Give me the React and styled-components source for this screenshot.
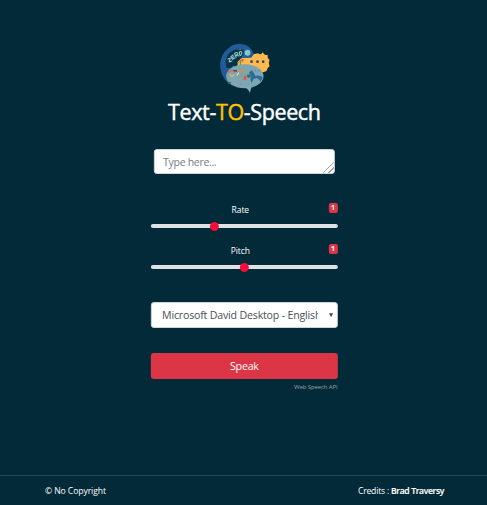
import React, { useState } from "react";
import styled, { createGlobalStyle } from "styled-components";

const GlobalStyle = createGlobalStyle`
  * { box-sizing: border-box; }
  body {
    margin: 0;
    background: #032a38;
    color: #fff;
    font-family: "Open Sans", "Noto Sans", sans-serif;
    overflow: hidden;
  }
`;

const Page = styled.div`
  height: 505px;
  display: flex;
  flex-direction: column;
`;

const Main = styled.main`
  flex: 1;
  width: 186.5px;
  margin: 0 auto;
  padding-top: 43px;
  display: flex;
  flex-direction: column;
  transform: translateX(0.85px);
`;

const Logo = styled.svg`
  width: 51px;
  height: 51px;
  margin-left: 69px;
  flex: none;
`;

const Title = styled.h1`
  margin: 1px 0 0;
  height: 33px;
  line-height: 33px;
  font-size: 21.5px;
  font-weight: 500;
  letter-spacing: -0.38px;
  text-align: center;
  white-space: nowrap;
  -webkit-text-stroke: 0.45px currentColor;
`;

const Accent = styled.span`
  color: #ffc107;
`;

const Message = styled.textarea`
  width: 181px;
  height: 25px;
  margin: 21px 3px 0;
  padding: 4px 8px 0;
  border: 1px solid #ced4da;
  border-radius: 3px;
  background: #fff;
  color: #495057;
  font: 10.6px/17px "Open Sans", sans-serif;
  letter-spacing: -0.35px;
  overflow: hidden;
  outline: none;
  &::placeholder { color: #757d84; }
  &::-webkit-resizer {
    background: linear-gradient(135deg, transparent 62%, #a5a5a5 62% 67%, transparent 67% 78%, #a5a5a5 78% 84%, transparent 84%);
  }
`;

const Sliders = styled.div`
  margin-top: 28px;
  display: flex;
  flex-direction: column;
`;

const Field = styled.div`
  height: 41px;
  display: grid;
  grid-template-columns: 1fr auto 1fr;
  grid-template-rows: 16px 16px;
`;

const Label = styled.label`
  grid-column: 2;
  font-size: 8.5px;
  line-height: 16px;
  letter-spacing: -0.08px;
  margin-right: 8px;
`;

const Badge = styled.span`
  justify-self: end;
  width: 9px;
  height: 10px;
  margin-top: 1px;
  border-radius: 2px;
  background: #dc3545;
  font-size: 7px;
  font-weight: 700;
  line-height: 10px;
  text-align: center;
`;

const Range = styled.input`
  grid-column: 1 / -1;
  appearance: none;
  width: 100%;
  height: 10px;
  margin: 3px 0 0;
  background: transparent;
  outline: none;
  &::-webkit-slider-runnable-track {
    height: 4.6px;
    border-radius: 3px;
    background: #dee2e6;
  }
  &::-webkit-slider-thumb {
    appearance: none;
    width: 9px;
    height: 9px;
    margin-top: -2.2px;
    border-radius: 50%;
    background: #f20e38;
  }
`;

const SelectBox = styled.div`
  height: 26px;
  margin-top: 18px;
  padding: 0 3px 0 10px;
  display: flex;
  align-items: center;
  border: 1px solid #ced4da;
  border-radius: 3px;
  background: #fff;
`;

const Select = styled.select`
  appearance: none;
  width: 156px;
  padding: 0;
  border: 0;
  background: transparent;
  color: #495057;
  font: 10.6px/20px "Open Sans", sans-serif;
  letter-spacing: -0.18px;
  outline: none;
`;

const Arrow = styled.svg`
  width: 4.5px;
  height: 4.5px;
  margin-left: auto;
`;

const SpeakButton = styled.button`
  height: 26px;
  margin-top: 25px;
  padding: 0;
  border: 0;
  border-radius: 3px;
  background: #dc3545;
  color: #fff;
  font: 10.7px/26px "Open Sans", sans-serif;
  letter-spacing: -0.25px;
`;

const ApiNote = styled.small`
  margin-top: 3px;
  font-size: 6px;
  line-height: 10px;
  color: #98a4aa;
  text-align: right;
  letter-spacing: -0.1px;
`;

const Footer = styled.footer`
  height: 30px;
  padding: 0 43px 0 45px;
  display: flex;
  align-items: center;
  justify-content: space-between;
  border-top: 1px solid #2b444e;
  font-size: 8.6px;
  letter-spacing: -0.08px;
`;

const Credits = styled.span`
  letter-spacing: -0.2px;
`;

const Author = styled.strong`
  font-weight: 600;
  letter-spacing: -0.35px;
  -webkit-text-stroke: 0.15px currentColor;
`;

function SpeechLogo() {
  return (
    <Logo viewBox="23 21 153 153" aria-hidden="true">
      <path d="M76 65L94 52Q115 58 138 52Q145 59 152 49Q155 59 166 56Q165 66 172 72L170 81L172 91Q164 96 163 105L147 111L98 108L76 96Z" fill="#fdb94e" />
      <path d="M125 55C115 25 83 14 54 32C27 49 18 83 28 111C34 129 48 144 64 151L57 113L71 77L90 66L117 65Z" fill="#235a98" />
      <path d="M43 96C35 67 48 47 69 41L94 41L94 54L82 72L70 83L56 96Z" fill="#08344b" />
      <circle cx="106" cy="50" r="9" fill="#83c7cb" />
      <ellipse cx="98" cy="121" rx="56" ry="36" fill="#7da6b4" />
      <path d="M96 153Q108 158 113 171Q118 160 117 150Z" fill="#85abb8" />
      <path d="M118 103Q126 110 129 119Q144 117 151 123Q151 131 145 137Q142 129 134 126L124 129L118 140Q112 128 117 119L110 110Z" fill="#2d6b9a" />
      <g fill="none" stroke="#8ed0c8" strokeWidth="3.3" strokeLinecap="round" strokeLinejoin="round">
        <path d="M47 69L54 67L51 78L59 75" />
        <path d="M63 57L56 62L61 70L68 66M58 65L65 62" />
        <path d="M72 64L67 52Q76 46 77 54L72 58L81 60" />
        <path d="M82 48Q87 44 89 50L86 58Q80 57 82 48" />
      </g>
      <circle cx="84" cy="41" r="2" fill="#e7514f" />
      <path d="M77 81L88 69L86 88Z" fill="#5e934b" />
      <path d="M88 69L96 71L90 78Z" fill="#e94444" />
      <path d="M79 83L81 75L85 84Z" fill="#f4bd45" />
      <g fill="#25485c">
        <circle cx="118" cy="77" r="4" /><circle cx="136" cy="77" r="4" /><circle cx="153" cy="77" r="4" />
      </g>
      <path d="M116 104h5M127 104h5M138 104h5" fill="none" stroke="#58899e" strokeWidth="3" />
      <g fill="none" strokeWidth="4" strokeLinecap="round">
        <path d="M49 109Q59 99 68 108" stroke="#e66745" />
        <path d="M65 104L73 105" stroke="#374d62" />
        <path d="M80 105Q87 98 96 105" stroke="#e58c43" />
        <path d="M54 115L59 123L65 116" stroke="#dfb75c" />
        <path d="M80 112Q81 123 89 120L93 112" stroke="#a79d61" />
        <path d="M75 117L79 111" stroke="#e8dec1" />
      </g>
      <path d="M96 119L103 119L102 133L94 132Z" fill="#ed5048" />
      <ellipse cx="110" cy="120" rx="6" ry="5" fill="#198253" />
      <ellipse cx="52" cy="140" rx="5" ry="3" fill="#198253" />
      <circle cx="86" cy="145" r="2" fill="#e65d51" />
      <path d="M64 141L72 145" stroke="#e8a95d" strokeWidth="2" />
    </Logo>
  );
}

function Slider({ label, initial, min, max }) {
  const [value, setValue] = useState(initial);
  return (
    <Field>
      <Label htmlFor={label}>{label}</Label>
      <Badge>{value}</Badge>
      <Range id={label} type="range" min={min} max={max} step="0.01" value={value} onChange={(e) => setValue(e.target.value)} />
    </Field>
  );
}

export default function App() {
  return (
    <>
      <GlobalStyle />
      <Page>
        <Main>
          <SpeechLogo />
          <Title>Text-<Accent>TO</Accent>-Speech</Title>
          <Message placeholder="Type here..." />
          <Sliders>
            <Slider label="Rate" initial={1} min="0.5" max="2" />
            <Slider label="Pitch" initial={1} min="0" max="2" />
          </Sliders>
          <SelectBox>
            <Select aria-label="Voice">
              <option>Microsoft David Desktop - English (United States)</option>
            </Select>
            <Arrow viewBox="0 0 5 5"><path d="M0.3 0.3h4.4L2.5 4.7z" fill="#3d4449" /></Arrow>
          </SelectBox>
          <SpeakButton type="button">Speak</SpeakButton>
          <ApiNote>Web Speech API</ApiNote>
        </Main>
        <Footer>
          <span>© No Copyright</span>
          <Credits>Credits : <Author>Brad Traversy</Author></Credits>
        </Footer>
      </Page>
    </>
  );
}
